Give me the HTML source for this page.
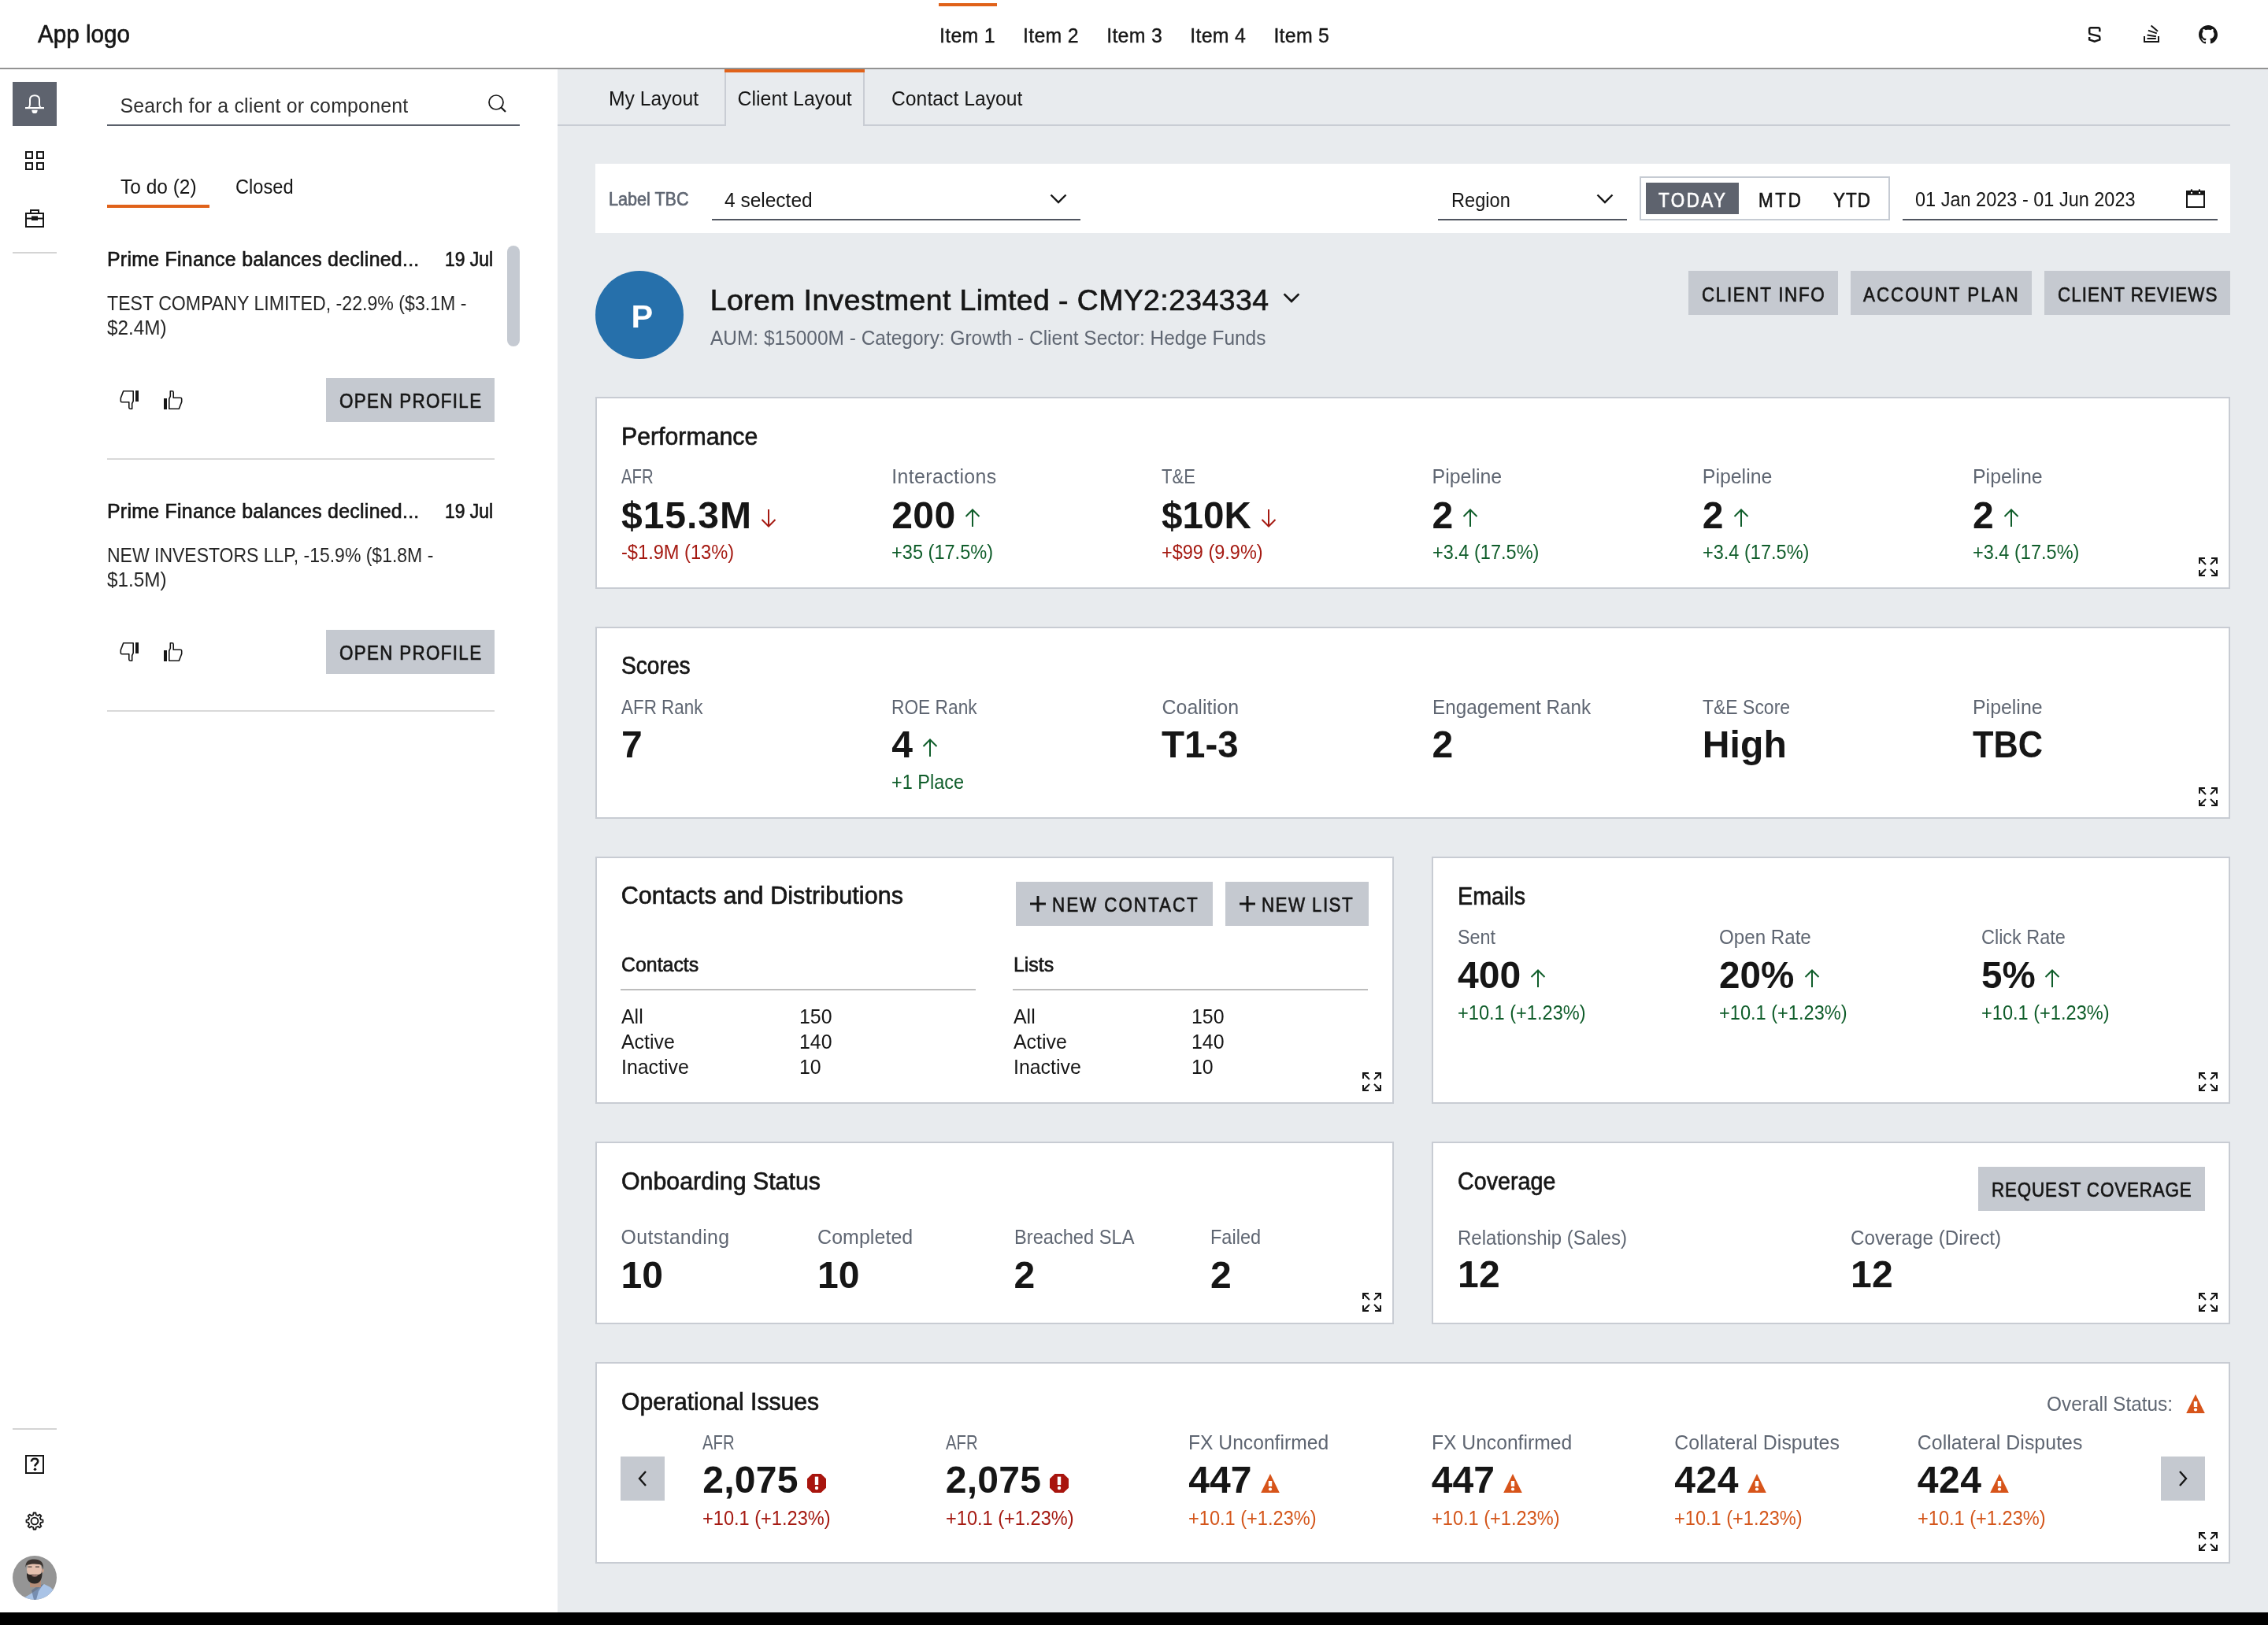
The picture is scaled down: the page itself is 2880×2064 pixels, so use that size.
<!DOCTYPE html>
<html><head><meta charset="utf-8"><title>Client Layout</title>
<style>
html,body{margin:0;padding:0;}
body{width:1440px;height:1032px;position:relative;overflow:hidden;background:#fff;font-family:"Liberation Sans",sans-serif;}
.t{position:absolute;white-space:nowrap;line-height:1;}
.tl{position:absolute;left:0;top:0;width:1440px;height:1032px;will-change:transform;}
@media (min-width:2000px){ html{zoom:2;} }
</style></head><body>
<div style="position:absolute;left:0.0px;top:0.0px;width:1440.0px;height:43.0px;background:#fff"></div>
<div style="position:absolute;left:0.0px;top:43.0px;width:1440.0px;height:1.0px;background:#939393"></div>
<div style="position:absolute;left:0.0px;top:44.0px;width:354.0px;height:980.0px;background:#fff"></div>
<div style="position:absolute;left:354.0px;top:44.0px;width:1086.0px;height:980.0px;background:#e8ebee"></div>
<div style="position:absolute;left:0.0px;top:1024.0px;width:1440.0px;height:8.0px;background:#000"></div>
<div style="position:absolute;left:596.0px;top:2.0px;width:37.0px;height:2.0px;background:#e0621a"></div>
<svg style="position:absolute;left:1325.0px;top:16.0px" width="10.0" height="12.0" viewBox="0 0 20 24"><path d="M16.3 8.2 V4.8 Q16.3 3.2 14.5 3.2 H5 Q3.2 3.2 3.2 4.8 V9.5 Q3.2 11 4.8 11.4 L14.7 13.8 Q16.3 14.2 16.3 15.8 V18.4 L9.75 20.6 L3.2 18.4 V15" fill="none" stroke="#161616" stroke-width="2.5"/></svg>
<svg style="position:absolute;left:1360.0px;top:15.0px" width="12.0" height="13.0" viewBox="0 0 24 26"><g fill="none" stroke="#161616" stroke-width="2"><path d="M3 16 V23 H21 V16"/><path d="M6.5 19 H17.8"/><path d="M6.6 14.6 L17.9 16.3"/><path d="M7.9 8.6 L18.8 12.4"/><path d="M11.6 2.4 L20 9.8"/></g></svg>
<svg style="position:absolute;left:1396.0px;top:16.0px" width="12.0" height="12.0" viewBox="0 0 24 24"><path d="M12 0C5.37 0 0 5.37 0 12c0 5.3 3.438 9.8 8.205 11.385.6.113.82-.258.82-.577 0-.285-.01-1.04-.015-2.04-3.338.724-4.042-1.61-4.042-1.61-.546-1.385-1.335-1.755-1.335-1.755-1.087-.744.084-.729.084-.729 1.205.084 1.838 1.236 1.838 1.236 1.07 1.835 2.809 1.305 3.495.998.108-.776.417-1.305.76-1.605-2.665-.3-5.466-1.332-5.466-5.93 0-1.31.465-2.38 1.235-3.22-.135-.303-.54-1.523.105-3.176 0 0 1.005-.322 3.3 1.23.96-.267 1.98-.399 3-.405 1.02.006 2.04.138 3 .405 2.28-1.552 3.285-1.23 3.285-1.23.645 1.653.24 2.873.12 3.176.765.84 1.23 1.91 1.23 3.22 0 4.61-2.805 5.625-5.475 5.92.42.36.81 1.096.81 2.22 0 1.606-.015 2.896-.015 3.286 0 .315.21.69.825.57C20.565 21.795 24 17.295 24 12c0-6.63-5.37-12-12-12" fill="#161616"/></svg>
<div style="position:absolute;left:8.0px;top:52.0px;width:28.0px;height:28.0px;background:#5e636e"></div>
<svg style="position:absolute;left:16.0px;top:60.0px" width="12.0" height="12.0" viewBox="0 0 24 24"><path d="M4.4 16.6 C5.8 15.4 6 14 6 12.4 V6.8 C6 2.8 8.4 1.2 12 1.2 C15.6 1.2 18 2.8 18 6.8 V12.4 C18 14 18.2 15.4 19.6 16.6" fill="none" stroke="#fff" stroke-width="2"/><rect x="0" y="16" width="24" height="2.2" fill="#fff"/><path d="M8.4 19.8 H15.6 V20.6 A3.6 3.6 0 0 1 8.4 20.6 Z" fill="#fff"/></svg>
<svg style="position:absolute;left:16.0px;top:96.0px" width="12.0" height="12.0" viewBox="0 0 24 24"><g fill="none" stroke="#161616" stroke-width="2"><rect x="1" y="1" width="8" height="8"/><rect x="15" y="1" width="8" height="8"/><rect x="1" y="15" width="8" height="8"/><rect x="15" y="15" width="8" height="8"/></g></svg>
<svg style="position:absolute;left:16.0px;top:132.0px" width="12.0" height="13.0" viewBox="0 0 24 26"><g fill="none" stroke="#161616" stroke-width="2"><rect x="1" y="7" width="22" height="17"/><rect x="7" y="3" width="10" height="4"/><path d="M1 13.5 H23"/></g><rect x="8" y="10.5" width="8" height="5.5" fill="#161616"/></svg>
<div style="position:absolute;left:8.0px;top:160.0px;width:28.0px;height:1.0px;background:#d4d4d4"></div>
<div style="position:absolute;left:8.0px;top:907.0px;width:28.0px;height:1.0px;background:#d4d4d4"></div>
<svg style="position:absolute;left:16.0px;top:924.0px" width="12.0" height="12.0" viewBox="0 0 24 24"><rect x="1" y="1" width="22" height="22" fill="none" stroke="#161616" stroke-width="2"/><path d="M7.9 8.6 C7.9 6.2 9.6 4.8 12.1 4.8 C14.6 4.8 16.2 6.2 16.2 8.3 C16.2 10.8 13.2 11.2 12.6 13.4 V14.6" fill="none" stroke="#161616" stroke-width="2.6"/><circle cx="12.5" cy="18.2" r="1.8" fill="#161616"/></svg>
<svg style="position:absolute;left:16.0px;top:960.0px" width="12.0" height="12.0" viewBox="0 0 24 24"><path d="M19.45 9.09 L19.80 10.23 L22.51 10.61 L22.51 13.39 L19.80 13.77 L19.33 15.21 L18.77 16.27 L20.42 18.44 L18.44 20.42 L16.27 18.77 L14.91 19.45 L13.77 19.80 L13.39 22.51 L10.61 22.51 L10.23 19.80 L8.79 19.33 L7.73 18.77 L5.56 20.42 L3.58 18.44 L5.23 16.27 L4.55 14.91 L4.20 13.77 L1.49 13.39 L1.49 10.61 L4.20 10.23 L4.67 8.79 L5.23 7.73 L3.58 5.56 L5.56 3.58 L7.73 5.23 L9.09 4.55 L10.23 4.20 L10.61 1.49 L13.39 1.49 L13.77 4.20 L15.21 4.67 L16.27 5.23 L18.44 3.58 L20.42 5.56 L18.77 7.73 Z" fill="none" stroke="#161616" stroke-width="1.8" stroke-linejoin="round"/><circle cx="12" cy="12" r="4.4" fill="none" stroke="#161616" stroke-width="1.9"/></svg>

<svg style="position:absolute;left:8.0px;top:988.0px" width="28.0" height="28.0" viewBox="0 0 56 56"><defs><clipPath id="avc"><circle cx="28" cy="28" r="28"/></clipPath></defs><g clip-path="url(#avc)"><rect width="56" height="56" fill="#959595"/><path d="M10 56 L22 49 L31 43 L40 36 L48 40 L56 48 V56 Z" fill="#a9c3e6"/><path d="M24 44 L31 39 L39 36 L33 45 L30 56 L27 56 Z" fill="#55698a" opacity="0.6"/><rect x="22" y="24" width="14" height="16" fill="#b58d78"/><ellipse cx="27.5" cy="17.5" rx="9.5" ry="10.5" fill="#e3c0ae"/><path d="M37.5 16 Q40.5 16.5 39.5 20 Q38.5 22.5 36.8 22 Z" fill="#c9a08c"/><path d="M18 22 C17.5 31 21.5 35.5 28 35.5 C34 35.5 38 31 37.5 20.5 C36 24 33 24.5 28 24 C23.5 24 20 24.5 18 22 Z" fill="#2d2825"/><path d="M23.5 25.5 Q28 24 32.5 25.5 Q28 27.5 23.5 25.5 Z" fill="#c99a90"/><path d="M16.5 15 C16 7 20.5 4.5 27.5 4.5 C35 4.5 40 8 39 18 C38 13 36.5 11.5 34 11 C28 10 22 10.5 17.5 12 Z" fill="#3b3430"/><path d="M19.5 14.2 H24.5 M29 14.2 H34" stroke="#4a3f3a" stroke-width="1.2"/></g></svg>
<svg style="position:absolute;left:308.0px;top:58.0px" width="15.0" height="15.0" viewBox="0 0 30 30"><circle cx="14" cy="14" r="9" fill="none" stroke="#161616" stroke-width="1.7"/><path d="M20.5 20.5 L26 26" stroke="#161616" stroke-width="2.2"/></svg>
<div style="position:absolute;left:68.0px;top:79.0px;width:262.0px;height:1.0px;background:#5a606b"></div>
<div style="position:absolute;left:68.0px;top:130.0px;width:65.0px;height:2.0px;background:#e0621a"></div>
<div style="position:absolute;left:322px;top:156px;width:8px;height:64px;border-radius:4px;background:#c5cad2"></div>
<svg style="position:absolute;left:76.0px;top:248.0px" width="12.0" height="12.0" viewBox="0 0 24 24"><g transform="rotate(180 12 12)"><rect x="0" y="10" width="4" height="14" fill="#161616"/><path d="M6.8 23.2 V10.6 L8.3 7.4 V0.8 H10.6 Q12.2 0.8 12.2 2.4 V9.2 H21.2 Q22.7 9.2 22.7 10.8 V14.4 L19.3 23.2 Z" fill="none" stroke="#161616" stroke-width="1.6" stroke-linejoin="round"/></g></svg>
<svg style="position:absolute;left:104.0px;top:248.0px" width="12.0" height="12.0" viewBox="0 0 24 24"><g><rect x="0" y="10" width="4" height="14" fill="#161616"/><path d="M6.8 23.2 V10.6 L8.3 7.4 V0.8 H10.6 Q12.2 0.8 12.2 2.4 V9.2 H21.2 Q22.7 9.2 22.7 10.8 V14.4 L19.3 23.2 Z" fill="none" stroke="#161616" stroke-width="1.6" stroke-linejoin="round"/></g></svg>
<div style="position:absolute;left:207.0px;top:240.0px;width:107.0px;height:28.0px;background:#c5c9d0"></div>
<div style="position:absolute;left:68.0px;top:291.0px;width:246.0px;height:1.0px;background:#d9d9d9"></div>
<svg style="position:absolute;left:76.0px;top:408.0px" width="12.0" height="12.0" viewBox="0 0 24 24"><g transform="rotate(180 12 12)"><rect x="0" y="10" width="4" height="14" fill="#161616"/><path d="M6.8 23.2 V10.6 L8.3 7.4 V0.8 H10.6 Q12.2 0.8 12.2 2.4 V9.2 H21.2 Q22.7 9.2 22.7 10.8 V14.4 L19.3 23.2 Z" fill="none" stroke="#161616" stroke-width="1.6" stroke-linejoin="round"/></g></svg>
<svg style="position:absolute;left:104.0px;top:408.0px" width="12.0" height="12.0" viewBox="0 0 24 24"><g><rect x="0" y="10" width="4" height="14" fill="#161616"/><path d="M6.8 23.2 V10.6 L8.3 7.4 V0.8 H10.6 Q12.2 0.8 12.2 2.4 V9.2 H21.2 Q22.7 9.2 22.7 10.8 V14.4 L19.3 23.2 Z" fill="none" stroke="#161616" stroke-width="1.6" stroke-linejoin="round"/></g></svg>
<div style="position:absolute;left:207.0px;top:400.0px;width:107.0px;height:28.0px;background:#c5c9d0"></div>
<div style="position:absolute;left:68.0px;top:451.0px;width:246.0px;height:1.0px;background:#d9d9d9"></div>
<div style="position:absolute;left:354.0px;top:79.0px;width:1062.0px;height:1.0px;background:#c9cdd4"></div>
<div style="position:absolute;left:460.0px;top:44.0px;width:89.0px;height:2.0px;background:#e0621a"></div>
<div style="position:absolute;left:460.0px;top:46.0px;width:1.0px;height:34.0px;background:#c9cdd4"></div>
<div style="position:absolute;left:548.0px;top:46.0px;width:1.0px;height:34.0px;background:#c9cdd4"></div>
<div style="position:absolute;left:461.0px;top:79.0px;width:87.0px;height:1.0px;background:#e8ebee"></div>
<div style="position:absolute;left:378.0px;top:104.0px;width:1038.0px;height:44.0px;background:#fff"></div>
<div style="position:absolute;left:452.0px;top:139.0px;width:234.0px;height:1.0px;background:#505560"></div>
<svg style="position:absolute;left:666.5px;top:122.75px" width="11.0" height="6.5" viewBox="0 0 22 13"><path d="M1.5 1.5 L11.0 11 L20.5 1.5" fill="none" stroke="#161616" stroke-width="2.4"/></svg>
<div style="position:absolute;left:913.0px;top:139.0px;width:120.0px;height:1.0px;background:#505560"></div>
<svg style="position:absolute;left:1013.5px;top:122.75px" width="11.0" height="6.5" viewBox="0 0 22 13"><path d="M1.5 1.5 L11.0 11 L20.5 1.5" fill="none" stroke="#161616" stroke-width="2.4"/></svg>
<div style="position:absolute;left:1041.0px;top:112.0px;width:159.0px;height:28.0px;border:1px solid #c6cbd3;box-sizing:border-box"></div>
<div style="position:absolute;left:1045.0px;top:116.0px;width:59.0px;height:20.0px;background:#5e636e"></div>
<div style="position:absolute;left:1208.0px;top:139.0px;width:200.0px;height:1.0px;background:#505560"></div>
<svg style="position:absolute;left:1388.0px;top:120.0px" width="12.0" height="12.0" viewBox="0 0 24 24"><rect x="1" y="3" width="22" height="20" fill="none" stroke="#161616" stroke-width="2"/><rect x="1" y="3" width="22" height="4.8" fill="#161616"/><rect x="5.9" y="0.4" width="2.1" height="3" fill="#161616"/><rect x="15.9" y="0.4" width="2.1" height="3" fill="#161616"/><rect x="6" y="3.9" width="2" height="2" fill="#fff"/><rect x="16" y="3.9" width="2" height="2" fill="#fff"/></svg>
<div style="position:absolute;left:378px;top:172px;width:56px;height:56px;border-radius:50%;background:#2670ab"></div>
<svg style="position:absolute;left:814.5px;top:185.5px" width="11.0" height="9.0" viewBox="0 0 22 18"><path d="M1.6 2.4 L11 11.8 L20.4 2.4" fill="none" stroke="#161616" stroke-width="2.7"/></svg>
<div style="position:absolute;left:1072.0px;top:172.0px;width:95.0px;height:28.0px;background:#c5c9d0"></div>
<div style="position:absolute;left:1175.0px;top:172.0px;width:115.0px;height:28.0px;background:#c5c9d0"></div>
<div style="position:absolute;left:1298.0px;top:172.0px;width:118.0px;height:28.0px;background:#c5c9d0"></div>
<div style="position:absolute;left:378.0px;top:252.0px;width:1038.0px;height:122.0px;background:#fff;border:1px solid #c8ccd3;box-sizing:border-box"></div>
<svg style="position:absolute;left:1396.0px;top:354.0px" width="12.0" height="12.0" viewBox="0 0 24 24"><g fill="none" stroke="#161616" stroke-width="2"><path d="M1 8 V1 H8 M1 1 L9 9"/><path d="M16 1 H23 V8 M23 1 L15 9"/><path d="M1 16 V23 H8 M1 23 L9 15"/><path d="M23 16 V23 H16 M23 23 L15 15"/></g></svg>
<div style="position:absolute;left:378.0px;top:398.0px;width:1038.0px;height:122.0px;background:#fff;border:1px solid #c8ccd3;box-sizing:border-box"></div>
<svg style="position:absolute;left:1396.0px;top:500.0px" width="12.0" height="12.0" viewBox="0 0 24 24"><g fill="none" stroke="#161616" stroke-width="2"><path d="M1 8 V1 H8 M1 1 L9 9"/><path d="M16 1 H23 V8 M23 1 L15 9"/><path d="M1 16 V23 H8 M1 23 L9 15"/><path d="M23 16 V23 H16 M23 23 L15 15"/></g></svg>
<div style="position:absolute;left:378.0px;top:544.0px;width:507.0px;height:157.0px;background:#fff;border:1px solid #c8ccd3;box-sizing:border-box"></div>
<div style="position:absolute;left:645.0px;top:560.0px;width:125.0px;height:28.0px;background:#c5c9d0"></div>
<svg style="position:absolute;left:653.0px;top:568.0px" width="12.0" height="12.0" viewBox="0 0 24 24"><path d="M12 2 V22 M2 12 H22" stroke="#161616" stroke-width="3"/></svg>
<div style="position:absolute;left:778.0px;top:560.0px;width:91.0px;height:28.0px;background:#c5c9d0"></div>
<svg style="position:absolute;left:786.0px;top:568.0px" width="12.0" height="12.0" viewBox="0 0 24 24"><path d="M12 2 V22 M2 12 H22" stroke="#161616" stroke-width="3"/></svg>
<div style="position:absolute;left:394.0px;top:628.0px;width:225.5px;height:1.0px;background:#bdbdbd"></div>
<div style="position:absolute;left:643.0px;top:628.0px;width:225.5px;height:1.0px;background:#bdbdbd"></div>
<svg style="position:absolute;left:865.0px;top:681.0px" width="12.0" height="12.0" viewBox="0 0 24 24"><g fill="none" stroke="#161616" stroke-width="2"><path d="M1 8 V1 H8 M1 1 L9 9"/><path d="M16 1 H23 V8 M23 1 L15 9"/><path d="M1 16 V23 H8 M1 23 L9 15"/><path d="M23 16 V23 H16 M23 23 L15 15"/></g></svg>
<div style="position:absolute;left:909.0px;top:544.0px;width:507.0px;height:157.0px;background:#fff;border:1px solid #c8ccd3;box-sizing:border-box"></div>
<svg style="position:absolute;left:1396.0px;top:681.0px" width="12.0" height="12.0" viewBox="0 0 24 24"><g fill="none" stroke="#161616" stroke-width="2"><path d="M1 8 V1 H8 M1 1 L9 9"/><path d="M16 1 H23 V8 M23 1 L15 9"/><path d="M1 16 V23 H8 M1 23 L9 15"/><path d="M23 16 V23 H16 M23 23 L15 15"/></g></svg>
<div style="position:absolute;left:378.0px;top:725.0px;width:507.0px;height:116.0px;background:#fff;border:1px solid #c8ccd3;box-sizing:border-box"></div>
<svg style="position:absolute;left:865.0px;top:821.0px" width="12.0" height="12.0" viewBox="0 0 24 24"><g fill="none" stroke="#161616" stroke-width="2"><path d="M1 8 V1 H8 M1 1 L9 9"/><path d="M16 1 H23 V8 M23 1 L15 9"/><path d="M1 16 V23 H8 M1 23 L9 15"/><path d="M23 16 V23 H16 M23 23 L15 15"/></g></svg>
<div style="position:absolute;left:909.0px;top:725.0px;width:507.0px;height:116.0px;background:#fff;border:1px solid #c8ccd3;box-sizing:border-box"></div>
<div style="position:absolute;left:1256.0px;top:741.0px;width:144.0px;height:28.0px;background:#c5c9d0"></div>
<svg style="position:absolute;left:1396.0px;top:821.0px" width="12.0" height="12.0" viewBox="0 0 24 24"><g fill="none" stroke="#161616" stroke-width="2"><path d="M1 8 V1 H8 M1 1 L9 9"/><path d="M16 1 H23 V8 M23 1 L15 9"/><path d="M1 16 V23 H8 M1 23 L9 15"/><path d="M23 16 V23 H16 M23 23 L15 15"/></g></svg>
<div style="position:absolute;left:378.0px;top:865.0px;width:1038.0px;height:128.0px;background:#fff;border:1px solid #c8ccd3;box-sizing:border-box"></div>
<svg style="position:absolute;left:1388.0px;top:885.5px" width="12.0" height="12.0" viewBox="0 0 24 24"><path d="M12 0 L23.8 24 H0.2 Z" fill="#d7541a"/><rect x="9.8" y="9" width="4.4" height="7" fill="#fff"/><circle cx="12" cy="19.5" r="2.1" fill="#fff"/></svg>
<div style="position:absolute;left:394.0px;top:925.0px;width:28.0px;height:28.0px;background:#c5c9d0"></div>
<svg style="position:absolute;left:403.0px;top:933.0px" width="10.0" height="12.0" viewBox="0 0 20 24"><path d="M14 3 L6 12 L14 21" fill="none" stroke="#161616" stroke-width="2.4"/></svg>
<div style="position:absolute;left:1372.0px;top:925.0px;width:28.0px;height:28.0px;background:#c5c9d0"></div>
<svg style="position:absolute;left:1381.0px;top:933.0px" width="10.0" height="12.0" viewBox="0 0 20 24"><path d="M6 3 L14 12 L6 21" fill="none" stroke="#161616" stroke-width="2.4"/></svg>
<svg style="position:absolute;left:1396.0px;top:973.0px" width="12.0" height="12.0" viewBox="0 0 24 24"><g fill="none" stroke="#161616" stroke-width="2"><path d="M1 8 V1 H8 M1 1 L9 9"/><path d="M16 1 H23 V8 M23 1 L15 9"/><path d="M1 16 V23 H8 M1 23 L9 15"/><path d="M23 16 V23 H16 M23 23 L15 15"/></g></svg>
<svg style="position:absolute;left:481.9px;top:323.1px" width="12.0" height="12.0" viewBox="0 0 24 24"><path d="M12 1 V23 M3.5 14 L12 22.5 L20.5 14" fill="none" stroke="#a51a12" stroke-width="2"/></svg>
<svg style="position:absolute;left:611.6px;top:323.1px" width="12.0" height="12.0" viewBox="0 0 24 24"><path d="M12 1 V23 M3.5 10 L12 1.5 L20.5 10" fill="none" stroke="#0f5d2a" stroke-width="2"/></svg>
<svg style="position:absolute;left:799.6px;top:323.1px" width="12.0" height="12.0" viewBox="0 0 24 24"><path d="M12 1 V23 M3.5 14 L12 22.5 L20.5 14" fill="none" stroke="#a51a12" stroke-width="2"/></svg>
<svg style="position:absolute;left:927.6563537597656px;top:323.1px" width="12.0" height="12.0" viewBox="0 0 24 24"><path d="M12 1 V23 M3.5 10 L12 1.5 L20.5 10" fill="none" stroke="#0f5d2a" stroke-width="2"/></svg>
<svg style="position:absolute;left:1099.2563537597657px;top:323.1px" width="12.0" height="12.0" viewBox="0 0 24 24"><path d="M12 1 V23 M3.5 10 L12 1.5 L20.5 10" fill="none" stroke="#0f5d2a" stroke-width="2"/></svg>
<svg style="position:absolute;left:1270.8563537597656px;top:323.1px" width="12.0" height="12.0" viewBox="0 0 24 24"><path d="M12 1 V23 M3.5 10 L12 1.5 L20.5 10" fill="none" stroke="#0f5d2a" stroke-width="2"/></svg>
<svg style="position:absolute;left:584.4563537597656px;top:469.0px" width="12.0" height="12.0" viewBox="0 0 24 24"><path d="M12 1 V23 M3.5 10 L12 1.5 L20.5 10" fill="none" stroke="#0f5d2a" stroke-width="2"/></svg>
<svg style="position:absolute;left:970.5px;top:615.4px" width="12.0" height="12.0" viewBox="0 0 24 24"><path d="M12 1 V23 M3.5 10 L12 1.5 L20.5 10" fill="none" stroke="#0f5d2a" stroke-width="2"/></svg>
<svg style="position:absolute;left:1144.3px;top:615.4px" width="12.0" height="12.0" viewBox="0 0 24 24"><path d="M12 1 V23 M3.5 10 L12 1.5 L20.5 10" fill="none" stroke="#0f5d2a" stroke-width="2"/></svg>
<svg style="position:absolute;left:1297.2px;top:615.4px" width="12.0" height="12.0" viewBox="0 0 24 24"><path d="M12 1 V23 M3.5 10 L12 1.5 L20.5 10" fill="none" stroke="#0f5d2a" stroke-width="2"/></svg>
<svg style="position:absolute;left:512.4px;top:936.0px" width="12.0" height="12.0" viewBox="0 0 24 24"><path d="M6.5 0 H17.5 L24 6.3 V17.7 L17.5 24 H6.5 L0 17.7 V6.3 Z" fill="#a8150e"/><rect x="9.8" y="3.6" width="4.4" height="10.4" fill="#fff"/><circle cx="12" cy="18" r="2.2" fill="#fff"/></svg>
<svg style="position:absolute;left:666.65px;top:936.0px" width="12.0" height="12.0" viewBox="0 0 24 24"><path d="M6.5 0 H17.5 L24 6.3 V17.7 L17.5 24 H6.5 L0 17.7 V6.3 Z" fill="#a8150e"/><rect x="9.8" y="3.6" width="4.4" height="10.4" fill="#fff"/><circle cx="12" cy="18" r="2.2" fill="#fff"/></svg>
<svg style="position:absolute;left:800.4px;top:936.0px" width="12.0" height="12.0" viewBox="0 0 24 24"><path d="M12 0 L23.8 24 H0.2 Z" fill="#d7541a"/><rect x="9.8" y="9" width="4.4" height="7" fill="#fff"/><circle cx="12" cy="19.5" r="2.1" fill="#fff"/></svg>
<svg style="position:absolute;left:954.65px;top:936.0px" width="12.0" height="12.0" viewBox="0 0 24 24"><path d="M12 0 L23.8 24 H0.2 Z" fill="#d7541a"/><rect x="9.8" y="9" width="4.4" height="7" fill="#fff"/><circle cx="12" cy="19.5" r="2.1" fill="#fff"/></svg>
<svg style="position:absolute;left:1109.4px;top:936.0px" width="12.0" height="12.0" viewBox="0 0 24 24"><path d="M12 0 L23.8 24 H0.2 Z" fill="#d7541a"/><rect x="9.8" y="9" width="4.4" height="7" fill="#fff"/><circle cx="12" cy="19.5" r="2.1" fill="#fff"/></svg>
<svg style="position:absolute;left:1263.65px;top:936.0px" width="12.0" height="12.0" viewBox="0 0 24 24"><path d="M12 0 L23.8 24 H0.2 Z" fill="#d7541a"/><rect x="9.8" y="9" width="4.4" height="7" fill="#fff"/><circle cx="12" cy="19.5" r="2.1" fill="#fff"/></svg>
<div class="tl">
<div class="t" style="left:24.00px;top:14.23px;font-size:15.26px;font-weight:400;color:#161616;-webkit-text-stroke:0.32px #161616;transform:scaleX(0.9717);transform-origin:0 0">App logo</div>
<div class="t" style="left:596.50px;top:16.46px;font-size:12.45px;font-weight:400;color:#161616;-webkit-text-stroke:0.18px #161616;letter-spacing:0.138px">Item 1</div>
<div class="t" style="left:649.55px;top:16.46px;font-size:12.45px;font-weight:400;color:#161616;-webkit-text-stroke:0.18px #161616;letter-spacing:0.138px">Item 2</div>
<div class="t" style="left:702.60px;top:16.46px;font-size:12.45px;font-weight:400;color:#161616;-webkit-text-stroke:0.18px #161616;letter-spacing:0.138px">Item 3</div>
<div class="t" style="left:755.65px;top:16.46px;font-size:12.45px;font-weight:400;color:#161616;-webkit-text-stroke:0.18px #161616;letter-spacing:0.138px">Item 4</div>
<div class="t" style="left:808.70px;top:16.46px;font-size:12.45px;font-weight:400;color:#161616;-webkit-text-stroke:0.18px #161616;letter-spacing:0.138px">Item 5</div>
<div class="t" style="left:76.20px;top:60.91px;font-size:12.45px;font-weight:400;color:#2e2e2e;letter-spacing:0.098px">Search for a client or component</div>
<div class="t" style="left:76.25px;top:112.46px;font-size:12.45px;font-weight:400;color:#161616;transform:scaleX(0.9831);transform-origin:0 0">To do (2)</div>
<div class="t" style="left:149.50px;top:112.46px;font-size:12.45px;font-weight:400;color:#161616;transform:scaleX(0.9505);transform-origin:0 0">Closed</div>
<div class="t" style="left:68.00px;top:158.46px;font-size:12.45px;font-weight:400;color:#161616;-webkit-text-stroke:0.32px #161616;letter-spacing:0.134px">Prime Finance balances declined...</div>
<div class="t" style="left:282.50px;top:158.46px;font-size:12.45px;font-weight:400;color:#161616;-webkit-text-stroke:0.32px #161616;transform:scaleX(0.9190);transform-origin:0 0">19 Jul</div>
<div class="t" style="left:68.00px;top:186.46px;font-size:12.45px;font-weight:400;color:#262626;transform:scaleX(0.9296);transform-origin:0 0">TEST COMPANY LIMITED, -22.9% ($3.1M -</div>
<div class="t" style="left:68.00px;top:202.21px;font-size:12.45px;font-weight:400;color:#262626;transform:scaleX(0.9752);transform-origin:0 0">$2.4M)</div>
<div class="t" style="left:215.50px;top:248.46px;font-size:12.45px;font-weight:400;color:#161616;-webkit-text-stroke:0.32px #161616;letter-spacing:0.734px;transform:scaleX(0.9000);transform-origin:0 0">OPEN PROFILE</div>
<div class="t" style="left:68.00px;top:318.46px;font-size:12.45px;font-weight:400;color:#161616;-webkit-text-stroke:0.32px #161616;letter-spacing:0.134px">Prime Finance balances declined...</div>
<div class="t" style="left:282.50px;top:318.46px;font-size:12.45px;font-weight:400;color:#161616;-webkit-text-stroke:0.32px #161616;transform:scaleX(0.9190);transform-origin:0 0">19 Jul</div>
<div class="t" style="left:68.00px;top:346.46px;font-size:12.45px;font-weight:400;color:#262626;transform:scaleX(0.9234);transform-origin:0 0">NEW INVESTORS LLP, -15.9% ($1.8M -</div>
<div class="t" style="left:68.00px;top:362.21px;font-size:12.45px;font-weight:400;color:#262626;transform:scaleX(0.9752);transform-origin:0 0">$1.5M)</div>
<div class="t" style="left:215.50px;top:408.46px;font-size:12.45px;font-weight:400;color:#161616;-webkit-text-stroke:0.32px #161616;letter-spacing:0.734px;transform:scaleX(0.9000);transform-origin:0 0">OPEN PROFILE</div>
<div class="t" style="left:386.40px;top:56.46px;font-size:12.45px;font-weight:400;color:#161616;transform:scaleX(0.9934);transform-origin:0 0">My Layout</div>
<div class="t" style="left:468.25px;top:56.46px;font-size:12.45px;font-weight:400;color:#161616">Client Layout</div>
<div class="t" style="left:565.85px;top:56.46px;font-size:12.45px;font-weight:400;color:#161616;transform:scaleX(0.9939);transform-origin:0 0">Contact Layout</div>
<div class="t" style="left:386.50px;top:120.98px;font-size:11.83px;font-weight:400;color:#5f6672;-webkit-text-stroke:0.32px #5f6672;transform:scaleX(0.9126);transform-origin:0 0">Label TBC</div>
<div class="t" style="left:460.00px;top:120.76px;font-size:12.45px;font-weight:400;color:#161616;transform:scaleX(0.9842);transform-origin:0 0">4 selected</div>
<div class="t" style="left:921.50px;top:120.81px;font-size:12.45px;font-weight:400;color:#161616;transform:scaleX(0.9476);transform-origin:0 0">Region</div>
<div class="t" style="left:1053.00px;top:120.81px;font-size:12.45px;font-weight:400;color:#fff;-webkit-text-stroke:0.32px #fff;letter-spacing:1.382px;transform:scaleX(0.9000);transform-origin:0 0">TODAY</div>
<div class="t" style="left:1116.50px;top:120.81px;font-size:12.45px;font-weight:400;color:#161616;-webkit-text-stroke:0.32px #161616;letter-spacing:1.475px;transform:scaleX(0.9000);transform-origin:0 0">MTD</div>
<div class="t" style="left:1163.90px;top:120.81px;font-size:12.45px;font-weight:400;color:#161616;-webkit-text-stroke:0.32px #161616;letter-spacing:0.562px;transform:scaleX(0.9000);transform-origin:0 0">YTD</div>
<div class="t" style="left:1216.00px;top:120.66px;font-size:12.45px;font-weight:400;color:#161616;transform:scaleX(0.9440);transform-origin:0 0">01 Jan 2023 - 01 Jun 2023</div>
<div class="t" style="left:400.75px;top:190.43px;font-size:20.76px;font-weight:700;color:#fff">P</div>
<div class="t" style="left:450.85px;top:181.58px;font-size:18.68px;font-weight:400;color:#161616;-webkit-text-stroke:0.32px #161616;letter-spacing:0.219px">Lorem Investment Limted - CMY2:234334</div>
<div class="t" style="left:450.85px;top:208.46px;font-size:12.45px;font-weight:400;color:#5f6672;transform:scaleX(0.9825);transform-origin:0 0">AUM: $15000M - Category: Growth - Client Sector: Hedge Funds</div>
<div class="t" style="left:1080.50px;top:180.76px;font-size:12.45px;font-weight:400;color:#161616;-webkit-text-stroke:0.32px #161616;letter-spacing:0.927px;transform:scaleX(0.9000);transform-origin:0 0">CLIENT INFO</div>
<div class="t" style="left:1183.00px;top:180.76px;font-size:12.45px;font-weight:400;color:#161616;-webkit-text-stroke:0.32px #161616;letter-spacing:1.091px;transform:scaleX(0.9000);transform-origin:0 0">ACCOUNT PLAN</div>
<div class="t" style="left:1306.30px;top:180.76px;font-size:12.45px;font-weight:400;color:#161616;-webkit-text-stroke:0.32px #161616;letter-spacing:0.586px;transform:scaleX(0.9000);transform-origin:0 0">CLIENT REVIEWS</div>
<div class="t" style="left:394.70px;top:269.28px;font-size:15.26px;font-weight:400;color:#161616;-webkit-text-stroke:0.32px #161616;transform:scaleX(0.9920);transform-origin:0 0">Performance</div>
<div class="t" style="left:394.50px;top:296.46px;font-size:12.45px;font-weight:400;color:#5f6672;transform:scaleX(0.8161);transform-origin:0 0">AFR</div>
<div class="t" style="left:394.50px;top:314.75px;font-size:24.04px;font-weight:700;color:#161616;letter-spacing:0.459px">$15.3M</div>
<div class="t" style="left:394.50px;top:344.71px;font-size:12.45px;font-weight:400;color:#a51a12;transform:scaleX(0.9490);transform-origin:0 0">-$1.9M (13%)</div>
<div class="t" style="left:566.10px;top:296.46px;font-size:12.45px;font-weight:400;color:#5f6672;letter-spacing:0.200px">Interactions</div>
<div class="t" style="left:566.10px;top:314.75px;font-size:24.04px;font-weight:700;color:#161616;letter-spacing:0.215px">200</div>
<div class="t" style="left:566.10px;top:344.71px;font-size:12.45px;font-weight:400;color:#0f5d2a;transform:scaleX(0.9471);transform-origin:0 0">+35 (17.5%)</div>
<div class="t" style="left:737.70px;top:296.46px;font-size:12.45px;font-weight:400;color:#5f6672;transform:scaleX(0.8868);transform-origin:0 0">T&amp;E</div>
<div class="t" style="left:737.70px;top:314.75px;font-size:24.04px;font-weight:700;color:#161616;transform:scaleX(0.9911);transform-origin:0 0">$10K</div>
<div class="t" style="left:737.70px;top:344.71px;font-size:12.45px;font-weight:400;color:#a51a12;transform:scaleX(0.9434);transform-origin:0 0">+$99 (9.9%)</div>
<div class="t" style="left:909.30px;top:296.46px;font-size:12.45px;font-weight:400;color:#5f6672">Pipeline</div>
<div class="t" style="left:909.30px;top:314.75px;font-size:24.04px;font-weight:700;color:#161616">2</div>
<div class="t" style="left:909.30px;top:344.71px;font-size:12.45px;font-weight:400;color:#0f5d2a;transform:scaleX(0.9454);transform-origin:0 0">+3.4 (17.5%)</div>
<div class="t" style="left:1080.90px;top:296.46px;font-size:12.45px;font-weight:400;color:#5f6672">Pipeline</div>
<div class="t" style="left:1080.90px;top:314.75px;font-size:24.04px;font-weight:700;color:#161616">2</div>
<div class="t" style="left:1080.90px;top:344.71px;font-size:12.45px;font-weight:400;color:#0f5d2a;transform:scaleX(0.9454);transform-origin:0 0">+3.4 (17.5%)</div>
<div class="t" style="left:1252.50px;top:296.46px;font-size:12.45px;font-weight:400;color:#5f6672">Pipeline</div>
<div class="t" style="left:1252.50px;top:314.75px;font-size:24.04px;font-weight:700;color:#161616">2</div>
<div class="t" style="left:1252.50px;top:344.71px;font-size:12.45px;font-weight:400;color:#0f5d2a;transform:scaleX(0.9454);transform-origin:0 0">+3.4 (17.5%)</div>
<div class="t" style="left:394.70px;top:415.08px;font-size:15.26px;font-weight:400;color:#161616;-webkit-text-stroke:0.32px #161616;transform:scaleX(0.9228);transform-origin:0 0">Scores</div>
<div class="t" style="left:394.50px;top:442.81px;font-size:12.45px;font-weight:400;color:#5f6672;transform:scaleX(0.9004);transform-origin:0 0">AFR Rank</div>
<div class="t" style="left:394.50px;top:460.65px;font-size:24.04px;font-weight:700;color:#161616">7</div>
<div class="t" style="left:566.10px;top:442.81px;font-size:12.45px;font-weight:400;color:#5f6672;transform:scaleX(0.9135);transform-origin:0 0">ROE Rank</div>
<div class="t" style="left:566.10px;top:460.65px;font-size:24.04px;font-weight:700;color:#161616">4</div>
<div class="t" style="left:566.10px;top:490.46px;font-size:12.45px;font-weight:400;color:#0f5d2a;transform:scaleX(0.9436);transform-origin:0 0">+1 Place</div>
<div class="t" style="left:737.70px;top:442.81px;font-size:12.45px;font-weight:400;color:#5f6672;letter-spacing:0.051px">Coalition</div>
<div class="t" style="left:737.70px;top:460.65px;font-size:24.04px;font-weight:700;color:#161616;transform:scaleX(0.9883);transform-origin:0 0">T1-3</div>
<div class="t" style="left:909.30px;top:442.81px;font-size:12.45px;font-weight:400;color:#5f6672;transform:scaleX(0.9755);transform-origin:0 0">Engagement Rank</div>
<div class="t" style="left:909.30px;top:460.65px;font-size:24.04px;font-weight:700;color:#161616">2</div>
<div class="t" style="left:1080.90px;top:442.81px;font-size:12.45px;font-weight:400;color:#5f6672;transform:scaleX(0.9229);transform-origin:0 0">T&amp;E Score</div>
<div class="t" style="left:1080.90px;top:460.65px;font-size:24.04px;font-weight:700;color:#161616;letter-spacing:0.048px">High</div>
<div class="t" style="left:1252.50px;top:442.81px;font-size:12.45px;font-weight:400;color:#5f6672">Pipeline</div>
<div class="t" style="left:1252.50px;top:460.65px;font-size:24.04px;font-weight:700;color:#161616;transform:scaleX(0.9016);transform-origin:0 0">TBC</div>
<div class="t" style="left:394.35px;top:561.08px;font-size:15.26px;font-weight:400;color:#161616;-webkit-text-stroke:0.32px #161616;letter-spacing:0.044px">Contacts and Distributions</div>
<div class="t" style="left:668.00px;top:568.46px;font-size:12.45px;font-weight:400;color:#161616;-webkit-text-stroke:0.32px #161616;letter-spacing:1.090px;transform:scaleX(0.9000);transform-origin:0 0">NEW CONTACT</div>
<div class="t" style="left:801.00px;top:568.46px;font-size:12.45px;font-weight:400;color:#161616;-webkit-text-stroke:0.32px #161616;letter-spacing:0.776px;transform:scaleX(0.9000);transform-origin:0 0">NEW LIST</div>
<div class="t" style="left:394.50px;top:606.46px;font-size:12.45px;font-weight:400;color:#161616;-webkit-text-stroke:0.32px #161616">Contacts</div>
<div class="t" style="left:394.50px;top:639.46px;font-size:12.45px;font-weight:400;color:#161616">All</div>
<div class="t" style="left:507.50px;top:639.46px;font-size:12.45px;font-weight:400;color:#161616">150</div>
<div class="t" style="left:394.50px;top:655.46px;font-size:12.45px;font-weight:400;color:#161616">Active</div>
<div class="t" style="left:507.50px;top:655.46px;font-size:12.45px;font-weight:400;color:#161616">140</div>
<div class="t" style="left:394.50px;top:671.46px;font-size:12.45px;font-weight:400;color:#161616">Inactive</div>
<div class="t" style="left:507.50px;top:671.46px;font-size:12.45px;font-weight:400;color:#161616">10</div>
<div class="t" style="left:643.50px;top:606.46px;font-size:12.45px;font-weight:400;color:#161616;-webkit-text-stroke:0.32px #161616">Lists</div>
<div class="t" style="left:643.50px;top:639.46px;font-size:12.45px;font-weight:400;color:#161616">All</div>
<div class="t" style="left:756.50px;top:639.46px;font-size:12.45px;font-weight:400;color:#161616">150</div>
<div class="t" style="left:643.50px;top:655.46px;font-size:12.45px;font-weight:400;color:#161616">Active</div>
<div class="t" style="left:756.50px;top:655.46px;font-size:12.45px;font-weight:400;color:#161616">140</div>
<div class="t" style="left:643.50px;top:671.46px;font-size:12.45px;font-weight:400;color:#161616">Inactive</div>
<div class="t" style="left:756.50px;top:671.46px;font-size:12.45px;font-weight:400;color:#161616">10</div>
<div class="t" style="left:925.50px;top:561.58px;font-size:15.26px;font-weight:400;color:#161616;-webkit-text-stroke:0.32px #161616;transform:scaleX(0.9397);transform-origin:0 0">Emails</div>
<div class="t" style="left:925.50px;top:588.96px;font-size:12.45px;font-weight:400;color:#5f6672;transform:scaleX(0.9380);transform-origin:0 0">Sent</div>
<div class="t" style="left:925.50px;top:607.05px;font-size:24.04px;font-weight:700;color:#161616">400</div>
<div class="t" style="left:925.50px;top:636.96px;font-size:12.45px;font-weight:400;color:#0f5d2a;transform:scaleX(0.9476);transform-origin:0 0">+10.1 (+1.23%)</div>
<div class="t" style="left:1091.70px;top:588.96px;font-size:12.45px;font-weight:400;color:#5f6672;transform:scaleX(0.9700);transform-origin:0 0">Open Rate</div>
<div class="t" style="left:1091.70px;top:607.05px;font-size:24.04px;font-weight:700;color:#161616;transform:scaleX(0.9903);transform-origin:0 0">20%</div>
<div class="t" style="left:1091.70px;top:636.96px;font-size:12.45px;font-weight:400;color:#0f5d2a;transform:scaleX(0.9476);transform-origin:0 0">+10.1 (+1.23%)</div>
<div class="t" style="left:1257.90px;top:588.96px;font-size:12.45px;font-weight:400;color:#5f6672;transform:scaleX(0.9414);transform-origin:0 0">Click Rate</div>
<div class="t" style="left:1257.90px;top:607.05px;font-size:24.04px;font-weight:700;color:#161616;transform:scaleX(0.9882);transform-origin:0 0">5%</div>
<div class="t" style="left:1257.90px;top:636.96px;font-size:12.45px;font-weight:400;color:#0f5d2a;transform:scaleX(0.9476);transform-origin:0 0">+10.1 (+1.23%)</div>
<div class="t" style="left:394.30px;top:742.58px;font-size:15.26px;font-weight:400;color:#161616;-webkit-text-stroke:0.32px #161616;transform:scaleX(0.9940);transform-origin:0 0">Onboarding Status</div>
<div class="t" style="left:394.30px;top:779.46px;font-size:12.45px;font-weight:400;color:#5f6672;letter-spacing:0.163px">Outstanding</div>
<div class="t" style="left:394.30px;top:797.30px;font-size:24.04px;font-weight:700;color:#161616">10</div>
<div class="t" style="left:519.05px;top:779.46px;font-size:12.45px;font-weight:400;color:#5f6672;letter-spacing:0.044px">Completed</div>
<div class="t" style="left:519.05px;top:797.30px;font-size:24.04px;font-weight:700;color:#161616">10</div>
<div class="t" style="left:643.80px;top:779.46px;font-size:12.45px;font-weight:400;color:#5f6672;transform:scaleX(0.9494);transform-origin:0 0">Breached SLA</div>
<div class="t" style="left:643.80px;top:797.30px;font-size:24.04px;font-weight:700;color:#161616">2</div>
<div class="t" style="left:768.55px;top:779.46px;font-size:12.45px;font-weight:400;color:#5f6672;transform:scaleX(0.9446);transform-origin:0 0">Failed</div>
<div class="t" style="left:768.55px;top:797.30px;font-size:24.04px;font-weight:700;color:#161616">2</div>
<div class="t" style="left:925.50px;top:742.33px;font-size:15.26px;font-weight:400;color:#161616;-webkit-text-stroke:0.32px #161616;transform:scaleX(0.9399);transform-origin:0 0">Coverage</div>
<div class="t" style="left:1264.50px;top:749.46px;font-size:12.45px;font-weight:400;color:#161616;-webkit-text-stroke:0.32px #161616;letter-spacing:0.469px;transform:scaleX(0.9000);transform-origin:0 0">REQUEST COVERAGE</div>
<div class="t" style="left:925.50px;top:780.16px;font-size:12.45px;font-weight:400;color:#5f6672;transform:scaleX(0.9650);transform-origin:0 0">Relationship (Sales)</div>
<div class="t" style="left:925.50px;top:797.15px;font-size:24.04px;font-weight:700;color:#161616;letter-spacing:0.187px">12</div>
<div class="t" style="left:1175.00px;top:780.16px;font-size:12.45px;font-weight:400;color:#5f6672;transform:scaleX(0.9730);transform-origin:0 0">Coverage (Direct)</div>
<div class="t" style="left:1175.00px;top:797.15px;font-size:24.04px;font-weight:700;color:#161616;letter-spacing:0.187px">12</div>
<div class="t" style="left:394.30px;top:882.28px;font-size:15.26px;font-weight:400;color:#161616;-webkit-text-stroke:0.32px #161616;transform:scaleX(0.9870);transform-origin:0 0">Operational Issues</div>
<div class="t" style="left:1299.30px;top:885.66px;font-size:12.45px;font-weight:400;color:#5f6672;transform:scaleX(0.9808);transform-origin:0 0">Overall Status:</div>
<div class="t" style="left:446.15px;top:909.86px;font-size:12.45px;font-weight:400;color:#5f6672;transform:scaleX(0.8161);transform-origin:0 0">AFR</div>
<div class="t" style="left:446.15px;top:927.40px;font-size:24.04px;font-weight:700;color:#161616;letter-spacing:0.101px">2,075</div>
<div class="t" style="left:446.15px;top:957.76px;font-size:12.45px;font-weight:400;color:#a51a12;transform:scaleX(0.9476);transform-origin:0 0">+10.1 (+1.23%)</div>
<div class="t" style="left:600.40px;top:909.86px;font-size:12.45px;font-weight:400;color:#5f6672;transform:scaleX(0.8161);transform-origin:0 0">AFR</div>
<div class="t" style="left:600.40px;top:927.40px;font-size:24.04px;font-weight:700;color:#161616;letter-spacing:0.101px">2,075</div>
<div class="t" style="left:600.40px;top:957.76px;font-size:12.45px;font-weight:400;color:#a51a12;transform:scaleX(0.9476);transform-origin:0 0">+10.1 (+1.23%)</div>
<div class="t" style="left:754.65px;top:909.86px;font-size:12.45px;font-weight:400;color:#5f6672;transform:scaleX(0.9905);transform-origin:0 0">FX Unconfirmed</div>
<div class="t" style="left:754.65px;top:927.40px;font-size:24.04px;font-weight:700;color:#161616">447</div>
<div class="t" style="left:754.65px;top:957.76px;font-size:12.45px;font-weight:400;color:#d4561b;transform:scaleX(0.9476);transform-origin:0 0">+10.1 (+1.23%)</div>
<div class="t" style="left:908.90px;top:909.86px;font-size:12.45px;font-weight:400;color:#5f6672;transform:scaleX(0.9905);transform-origin:0 0">FX Unconfirmed</div>
<div class="t" style="left:908.90px;top:927.40px;font-size:24.04px;font-weight:700;color:#161616">447</div>
<div class="t" style="left:908.90px;top:957.76px;font-size:12.45px;font-weight:400;color:#d4561b;transform:scaleX(0.9476);transform-origin:0 0">+10.1 (+1.23%)</div>
<div class="t" style="left:1063.15px;top:909.86px;font-size:12.45px;font-weight:400;color:#5f6672;letter-spacing:0.020px">Collateral Disputes</div>
<div class="t" style="left:1063.15px;top:927.40px;font-size:24.04px;font-weight:700;color:#161616;letter-spacing:0.215px">424</div>
<div class="t" style="left:1063.15px;top:957.76px;font-size:12.45px;font-weight:400;color:#d4561b;transform:scaleX(0.9476);transform-origin:0 0">+10.1 (+1.23%)</div>
<div class="t" style="left:1217.40px;top:909.86px;font-size:12.45px;font-weight:400;color:#5f6672;letter-spacing:0.020px">Collateral Disputes</div>
<div class="t" style="left:1217.40px;top:927.40px;font-size:24.04px;font-weight:700;color:#161616;letter-spacing:0.215px">424</div>
<div class="t" style="left:1217.40px;top:957.76px;font-size:12.45px;font-weight:400;color:#d4561b;transform:scaleX(0.9476);transform-origin:0 0">+10.1 (+1.23%)</div>
</div>
</body></html>
